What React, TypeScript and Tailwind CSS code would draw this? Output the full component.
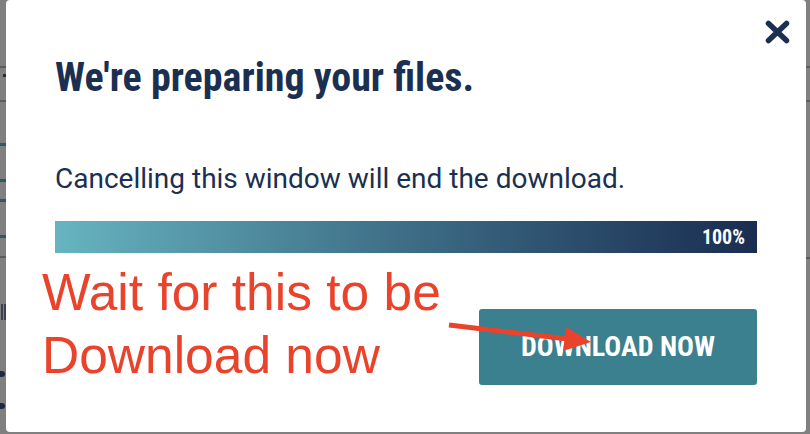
import React from 'react';

const condensed = { fontFamily: '"Roboto Condensed", "Liberation Sans Narrow", Roboto, sans-serif' };

/**
 * Download modal with a hand-drawn annotation on top
 */
const App = () => {
  return (
    <div className="relative w-[810px] h-[434px] overflow-hidden bg-[#808080] flex">
      {/* Page behind the overlay, left edge */}
      <div className="w-[6px] shrink-0 flex flex-col">
        <div className="mt-[66px] h-[2px] bg-[#5c5c5c]" />
        <div className="mt-[6px] ml-[3px] h-[3px] bg-[#1f2a3c]" />
        <div className="mt-[23px] h-[2px] bg-[#5c5c5c]" />
        <div className="mt-[41px] h-[3px] bg-[#2c5a5f]" />
        <div className="mt-[33px] h-[3px] bg-[#2c5a5f]" />
        <div className="mt-[17px] h-[3px] bg-[#2c5a5f]" />
        <div className="mt-[33px] h-[3px] bg-[#2c5a5f]" />
        <div className="mt-[18px] h-[2px] bg-[#5c5c5c]" />
        <div className="mt-[46px] ml-[1px] w-[5px] h-[16px] border-l-[2px] border-r-[2px] border-[#2a3546] opacity-80" />
        <div className="mt-[51px] w-[5px] h-[6px] rounded-r-full bg-[#1b2a40]" />
        <div className="mt-[26px] w-[5px] h-[6px] rounded-r-full bg-[#1b2a40]" />
      </div>

      {/* Modal */}
      <div className="relative w-[800px] h-[432px] shrink-0 bg-white rounded-[4px] px-[49px]">
        <button className="absolute top-[20px] right-[16px] w-[25px] h-[24px]" aria-label="Close">
          <svg viewBox="0 0 25 24" width="25" height="24">
            <path d="M3.5 3.5 L21.5 20.5 M21.5 3.5 L3.5 20.5" stroke="#1b2f51" strokeWidth="5.5" strokeLinecap="round" fill="none" />
          </svg>
        </button>

        <h2 className="pt-[56px] text-[40px] leading-[44px] font-bold text-[#1b2f51]" style={condensed}>
          We're preparing your files.
        </h2>

        <p className="mt-[63px] text-[28px] leading-[32px] text-[#1b2f51]" style={{ fontFamily: 'Roboto, sans-serif' }}>
          Cancelling this window will end the download.
        </p>

        <div className="mt-[26px] h-[32px] bg-gradient-to-r from-[#67b4c0] to-[#1a2d50] flex items-center justify-end pr-[12px]">
          <span className="text-[20px] font-bold text-white" style={condensed}>100%</span>
        </div>

        <div className="mt-[56px] flex justify-end">
          <button
            className="w-[278px] h-[76px] rounded-[3px] bg-[#3a808e] text-white text-[28px] font-bold uppercase"
            style={condensed}
          >
            Download now
          </button>
        </div>
      </div>

      {/* Page behind the overlay, right edge */}
      <div className="w-[4px] shrink-0 flex flex-col">
        <div className="mt-[66px] h-[2px] bg-[#5c5c5c]" />
        <div className="mt-[32px] h-[2px] bg-[#5c5c5c]" />
        <div className="mt-[155px] h-[2px] bg-[#5c5c5c]" />
      </div>

      {/* Annotation */}
      <div
        className="absolute left-[42px] top-[261px] text-[51.5px] leading-[63px] text-[#e9432b]"
        style={{ fontFamily: '"Liberation Sans", Arial, sans-serif' }}
      >
        <div>Wait for this to be</div>
        <div>Download now</div>
      </div>
      <svg className="absolute left-0 top-0" width="810" height="434" viewBox="0 0 810 434">
        <line x1="449" y1="325" x2="568" y2="339" stroke="#e9432b" strokeWidth="5" />
        <polygon points="566,327 591,342 563,351" fill="#e9432b" />
      </svg>
    </div>
  );
};

export default App;
